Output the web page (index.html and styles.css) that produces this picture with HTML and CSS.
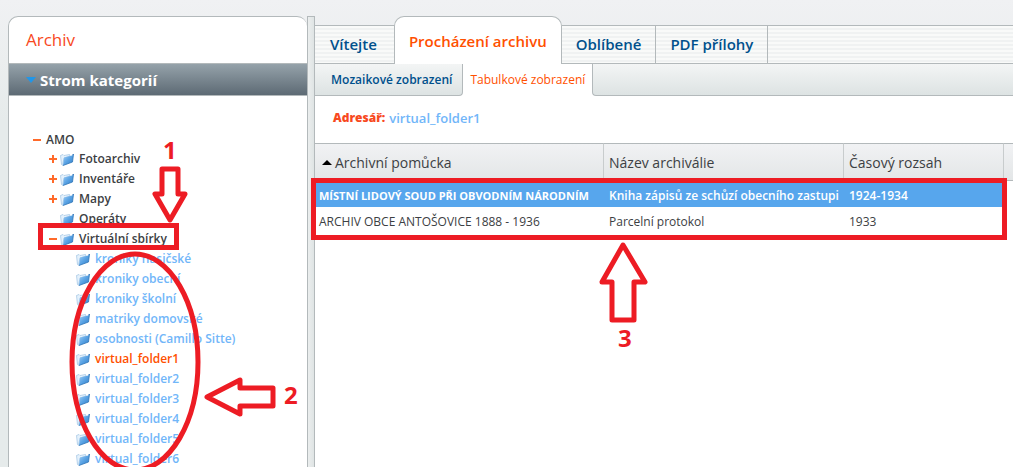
FILE: index.html
```
<!DOCTYPE html>
<html lang="cs">

<head>
    <meta charset="UTF-8" />
    <meta name="viewport" content="width=device-width, initial-scale=1.0" />
    <title>Archiv - Procházení archivu</title>
    <link rel="stylesheet" href="styles.css">
</head>

<body>
    <!-- shared folder icon -->
    <svg class="defs" width="0" height="0" aria-hidden="true">
        <defs>
            <linearGradient id="folder-front" x1="0" y1="0" x2="1" y2="1">
                <stop offset="0" stop-color="#a8d2f7" />
                <stop offset="0.5" stop-color="#5aa3e4" />
                <stop offset="1" stop-color="#2f7cc6" />
            </linearGradient>
            <symbol id="folder" viewBox="0 0 14 13">
                <path d="M0.5 2.5L3 1.5L4 2.5L9.5 1.5L10 3L4 5L2.5 12.5L1.5 11.5Z" fill="#e4f1fc" stroke="#9fc3e3" stroke-width="0.7" />
                <path d="M4 4.5L12 2.5L13.5 1L12.5 9L3 12.5Z" fill="url(#folder-front)" />
                <path d="M12.5 2L13.5 1L12.5 9L3 12.5" fill="none" stroke="#2f75b8" stroke-width="0.8" />
            </symbol>
        </defs>
    </svg>

    <div class="layout">
        <aside class="sidebar">
            <h1>Archiv</h1>
            <h2><button class="section" type="button"><span class="arrow-down"></span>Strom kategorií</button></h2>
            <ul class="tree">
                <li>
                    <div class="node root"><button class="toggle minus" type="button" aria-label="Sbalit"></button>AMO</div>
                    <ul>
                        <li><div class="node"><button class="toggle plus" type="button" aria-label="Rozbalit"></button><svg class="folder"><use href="#folder" /></svg><a href="#">Fotoarchiv</a></div></li>
                        <li><div class="node"><button class="toggle plus" type="button" aria-label="Rozbalit"></button><svg class="folder"><use href="#folder" /></svg><a href="#">Inventáře</a></div></li>
                        <li><div class="node"><button class="toggle plus" type="button" aria-label="Rozbalit"></button><svg class="folder"><use href="#folder" /></svg><a href="#">Mapy</a></div></li>
                        <li><div class="node"><span class="toggle"></span><svg class="folder"><use href="#folder" /></svg><a href="#">Operáty</a></div></li>
                        <li>
                            <div class="node"><button class="toggle minus" type="button" aria-label="Sbalit"></button><svg class="folder"><use href="#folder" /></svg><a href="#">Virtuální sbírky</a></div>
                            <ul class="virtual">
                                <li><div class="node"><svg class="folder"><use href="#folder" /></svg><a href="#">kroniky hasičské</a></div></li>
                                <li><div class="node"><svg class="folder"><use href="#folder" /></svg><a href="#">kroniky obecní</a></div></li>
                                <li><div class="node"><svg class="folder"><use href="#folder" /></svg><a href="#">kroniky školní</a></div></li>
                                <li><div class="node"><svg class="folder"><use href="#folder" /></svg><a href="#">matriky domovské</a></div></li>
                                <li><div class="node"><svg class="folder"><use href="#folder" /></svg><a href="#">osobnosti (Camillo Sitte)</a></div></li>
                                <li><div class="node"><svg class="folder"><use href="#folder" /></svg><a class="current" href="#">virtual_folder1</a></div></li>
                                <li><div class="node"><svg class="folder"><use href="#folder" /></svg><a href="#">virtual_folder2</a></div></li>
                                <li><div class="node"><svg class="folder"><use href="#folder" /></svg><a href="#">virtual_folder3</a></div></li>
                                <li><div class="node"><svg class="folder"><use href="#folder" /></svg><a href="#">virtual_folder4</a></div></li>
                                <li><div class="node"><svg class="folder"><use href="#folder" /></svg><a href="#">virtual_folder5</a></div></li>
                                <li><div class="node"><svg class="folder"><use href="#folder" /></svg><a href="#">virtual_folder6</a></div></li>
                            </ul>
                        </li>
                    </ul>
                </li>
            </ul>
        </aside>

        <div class="splitter"></div>

        <main>
            <nav class="tabs">
                <a href="#">Vítejte</a>
                <a class="active" href="#">Procházení archivu</a>
                <a href="#">Oblíbené</a>
                <a href="#">PDF přílohy</a>
                <span class="rest"></span>
            </nav>
            <nav class="subtabs">
                <a href="#">Mozaikové zobrazení</a>
                <a class="active" href="#">Tabulkové zobrazení</a>
                <span class="rest"></span>
            </nav>
            <p class="path"><strong>Adresář:</strong> <a href="#">virtual_folder1</a></p>
            <table>
                <colgroup>
                    <col class="col-title">
                    <col class="col-name">
                    <col class="col-range">
                    <col>
                </colgroup>
                <thead>
                    <tr>
                        <th><span class="sort-up"></span>Archivní pomůcka</th>
                        <th>Název archiválie</th>
                        <th>Časový rozsah</th>
                        <td></td>
                    </tr>
                </thead>
                <tbody>
                    <tr class="selected">
                        <td>MÍSTNÍ LIDOVÝ SOUD PŘI OBVODNÍM NÁRODNÍM</td>
                        <td>Kniha zápisů ze schůzí obecního zastupi</td>
                        <td>1924-1934</td>
                        <td></td>
                    </tr>
                    <tr>
                        <td>ARCHIV OBCE ANTOŠOVICE 1888 - 1936</td>
                        <td>Parcelní protokol</td>
                        <td>1933</td>
                        <td></td>
                    </tr>
                </tbody>
            </table>
        </main>
    </div>

    <!-- numbered marks over the page -->
    <svg class="marks" width="1013" height="467" viewBox="0 0 1013 467">
        <rect x="40.5" y="225.5" width="136" height="22" />
        <rect x="313.5" y="180.5" width="691" height="57" />
        <ellipse cx="135" cy="362" rx="63" ry="108" />
        <path d="M162 169H178V194H185L170 220L155 194H162Z" />
        <path d="M207 397L240 380V388H273V406H240V414Z" />
        <path d="M623 245L645 282H634V320H612V282H602Z" />
        <text x="163" y="159">1</text>
        <text x="284" y="404">2</text>
        <text x="618" y="347">3</text>
    </svg>
</body>

</html>
```
FILE: styles.css
```
:root {
    --line: #b3b9bb;
    --orange: #ff5000;
    --navy: #00508c;
    --sky: #71b6f9;
    --text: #3c4043;
    --mark: #ed1c24;
}

/* Base Styles */
* {
    box-sizing: border-box;
}

body {
    font-family: "Trebuchet MS", "Open Sans", sans-serif;
    font-size: 12px;
    color: var(--text);
    background: linear-gradient(#f0f1f3, #e6ebeb 120px);
    margin: 0;
    height: 100vh;
    position: relative;
    overflow: hidden;
}

a {
    color: inherit;
    text-decoration: none;
}

button {
    font: inherit;
    color: inherit;
    background: none;
    border: 0;
    padding: 0;
}

ul {
    list-style: none;
    margin: 0;
    padding: 0;
}

.defs {
    position: absolute;
}

.layout {
    display: flex;
    height: 100vh;
    padding: 16px 0 0 8px;
}

/* Sidebar */
.sidebar {
    width: 299px;
    flex: none;
    background: white;
    border: 1px solid var(--line);
    border-right: 0;
    border-bottom: 0;
    border-radius: 10px 10px 0 0;
    overflow: hidden;
}

.sidebar h1 {
    color: #f8491e;
    font-size: 17px;
    font-weight: 400;
    line-height: 46px;
    margin: 0;
    padding-left: 17px;
}

.sidebar h2 {
    margin: 0;
}

.section {
    display: flex;
    align-items: center;
    gap: 4px;
    width: 100%;
    height: 33px;
    padding-left: 17px;
    color: white;
    font-size: 15px;
    font-weight: 700;
    background: linear-gradient(#95a2aa, #5d6a74);
    border-top: 1px solid var(--line);
    border-bottom: 1px solid var(--line);
}

.arrow-down {
    border: 5px solid transparent;
    border-top: 6px solid #2196e8;
    border-bottom: 0;
}

.tree {
    padding: 34px 0 0 24px;
    font-weight: 600;
}

.tree ul {
    padding-left: 16px;
}

.tree .virtual {
    padding-left: 27px;
    color: var(--sky);
}

.node {
    display: flex;
    align-items: center;
    height: 20px;
    line-height: 18px;
    padding-bottom: 2px;
    white-space: nowrap;
}

.toggle {
    width: 11px;
    height: 12px;
    flex: none;
    background: no-repeat 0 5px / 8px 2px;
}

.toggle.minus {
    background-image: linear-gradient(#ff6a2a, #ff6a2a);
}

.toggle.plus {
    background-image: linear-gradient(#ff6a2a, #ff6a2a), linear-gradient(#ff6a2a, #ff6a2a);
    background-size: 8px 2px, 2px 8px;
    background-position: 0 5px, 3px 2px;
}

.root {
    padding-bottom: 0;
}

.root .toggle {
    margin-right: 2px;
}

.folder {
    width: 14px;
    height: 13px;
    flex: none;
    margin-right: 5px;
}

.current {
    color: var(--orange);
}

.splitter {
    width: 8px;
    flex: none;
    background: linear-gradient(90deg, #ebeeee, #dfe4e4);
    border: 1px solid var(--line);
    border-bottom: 0;
}

/* Content */
main {
    flex: 1;
    min-width: 0;
    background: linear-gradient(transparent 40px, white 40px);
}

.tabs {
    display: flex;
    align-items: flex-end;
    height: 48px;
    color: var(--navy);
    font-size: 15px;
    font-weight: 600;
    white-space: nowrap;
}

.tabs > * {
    height: 39px;
    line-height: 37px;
    padding: 0 14px;
    background: repeating-linear-gradient(#f9faf9 0 2px, #f0f2f2 2px 4px);
    border: 1px solid var(--line);
    border-left: 0;
}

.tabs :first-child {
    padding: 0 17px 0 15px;
}

.tabs .active {
    height: 48px;
    line-height: 48px;
    margin-left: -1px;
    color: var(--orange);
    background: white;
    border-left: 1px solid var(--line);
    border-bottom: 0;
    border-radius: 10px 10px 0 0;
}

.tabs .rest,
.subtabs .rest {
    flex: 1;
    padding: 0;
    border-right: 0;
}

.subtabs {
    display: flex;
    height: 32px;
    color: var(--navy);
    font-weight: 600;
    white-space: nowrap;
}

.subtabs > * {
    line-height: 31px;
    padding: 0 10px 0 16px;
    background: linear-gradient(#f3f5f5, #dde3e3);
    border: 1px solid var(--line);
    border-width: 0 1px 1px 0;
    border-radius: 0 0 4px 0;
}

.subtabs .active {
    padding: 0 7px;
    color: var(--orange);
    font-weight: 500;
    background: white;
    border: 0;
}

.subtabs .rest {
    border-left-width: 1px;
    border-radius: 0 0 0 4px;
}

.path {
    display: flex;
    gap: 4px;
    height: 47px;
    margin: 0;
    padding: 12px 18px;
    font-size: 13px;
    line-height: 20px;
    font-weight: 600;
}

.path strong {
    color: #f8491e;
    font-size: 12px;
}

.path a {
    color: var(--sky);
}

table {
    width: 100%;
    table-layout: fixed;
    border-collapse: separate;
    border-spacing: 0;
}

.col-title {
    width: 289px;
}

.col-name {
    width: 240px;
}

.col-range {
    width: 160px;
}

th,
td {
    height: 26px;
    padding: 0 5px;
    text-align: left;
    white-space: nowrap;
    overflow: hidden;
}

th:first-child,
td:first-child {
    padding-left: 4px;
}

thead th,
thead td {
    height: 38px;
    background: linear-gradient(#f1f2f4, #e3e6e7);
    border-top: 1px solid var(--line);
    border-bottom: 1px solid var(--line);
}

thead th {
    font-size: 14px;
    font-weight: 400;
    border-right: 1px solid #c8cccd;
}

tbody td {
    padding-top: 2px;
}

.sort-up {
    display: inline-block;
    margin: 0 3px 3px;
    border: 5px solid transparent;
    border-top: 0;
    border-bottom-color: black;
}

.selected {
    color: white;
    font-weight: 600;
}

.selected td:first-child {
    font-size: 11px;
    font-weight: 700;
}

.selected td:not(:last-child) {
    background: #57a6ed;
}

/* Marks */
.marks {
    position: absolute;
    top: 0;
    left: 0;
    fill: none;
    stroke: var(--mark);
    stroke-width: 5px;
    stroke-linejoin: round;
    pointer-events: none;
}

.marks rect {
    stroke-linejoin: miter;
}

.marks text {
    font-family: "Open Sans", sans-serif;
    font-size: 24px;
    font-weight: 700;
    fill: var(--mark);
    stroke: none;
}
```
